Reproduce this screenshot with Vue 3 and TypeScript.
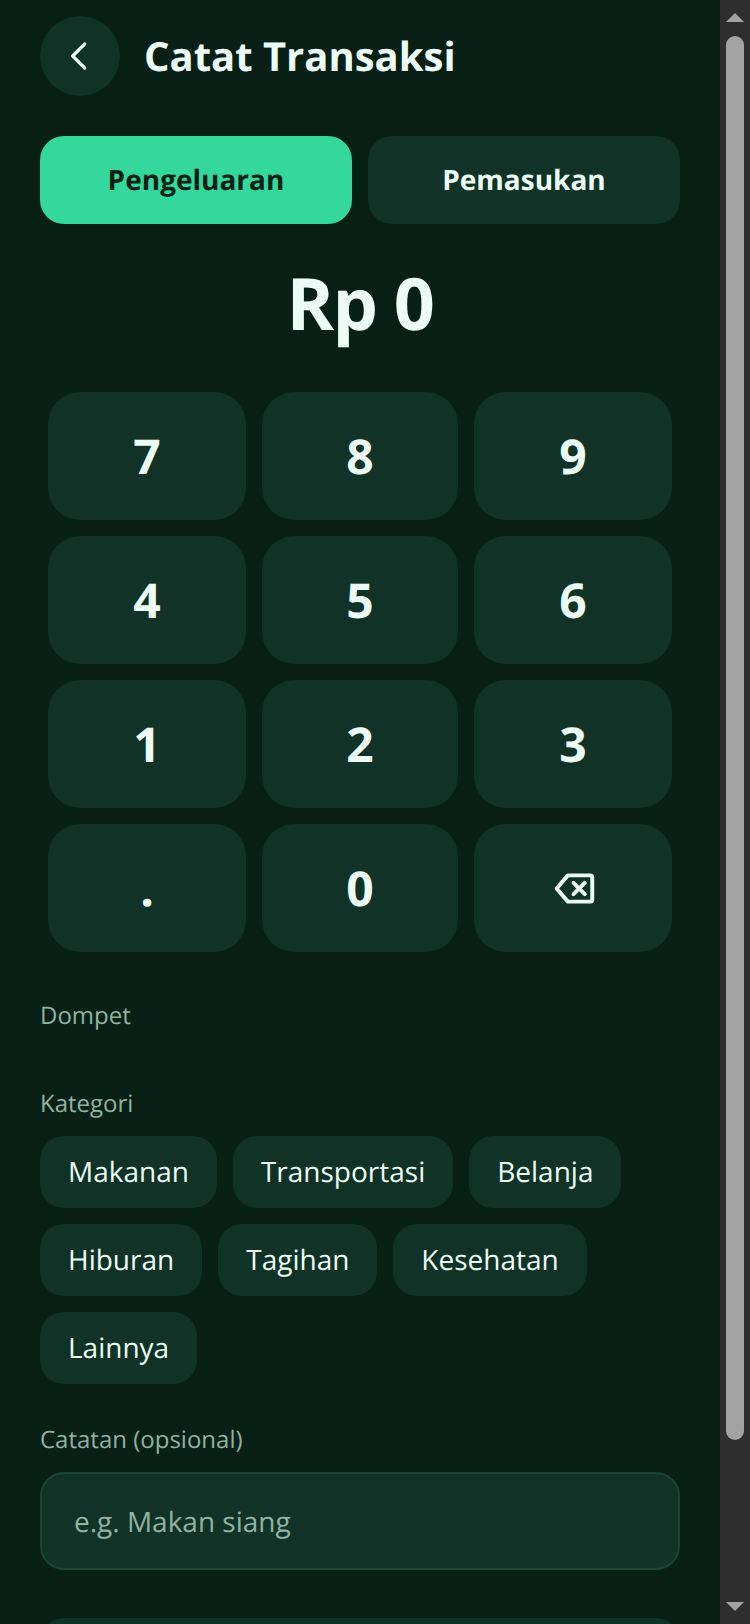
<script setup lang="ts">
import { computed, ref } from 'vue';

const KEYS = ['7', '8', '9', '4', '5', '6', '1', '2', '3', '.', '0', 'back'];
const CATEGORIES = ['Makanan', 'Transportasi', 'Belanja', 'Hiburan', 'Tagihan', 'Kesehatan', 'Lainnya'];

const type = ref<'out' | 'in'>('out');
const amount = ref('0');
const category = ref('');
const note = ref('');

const display = computed(() => `Rp ${amount.value}`);

function press(key: string) {
  if (key === 'back') {
    amount.value = amount.value.length > 1 ? amount.value.slice(0, -1) : '0';
  } else if (amount.value === '0' && key !== '.') {
    amount.value = key;
  } else {
    amount.value += key;
  }
}
</script>

<template>
  <div class="shell">
    <main class="page">
      <header class="header">
        <button type="button" class="back" aria-label="Kembali">
          <svg viewBox="0 0 24 24" width="32" height="32" fill="none" stroke="currentColor" stroke-width="2.4" stroke-linecap="round" stroke-linejoin="round">
            <path d="M15.5 3 6.5 12l9 9" />
          </svg>
        </button>
        <h1 class="title">Catat Transaksi</h1>
      </header>

      <div class="tabs">
        <button type="button" class="tab" :class="{ active: type === 'out' }" @click="type = 'out'">Pengeluaran</button>
        <button type="button" class="tab" :class="{ active: type === 'in' }" @click="type = 'in'">Pemasukan</button>
      </div>

      <div class="amount">{{ display }}</div>

      <div class="keypad">
        <button v-for="key in KEYS" :key="key" type="button" class="key" @click="press(key)">
          <svg v-if="key === 'back'" viewBox="0 0 24 24" width="45" height="45" fill="none" stroke="currentColor" stroke-width="2.1" stroke-linecap="round" stroke-linejoin="round" aria-label="Hapus">
            <path d="M21 5H9L3 12l6 7h12a1 1 0 0 0 1-1V6a1 1 0 0 0-1-1Z" />
            <path d="m12 9 6 6M18 9l-6 6" />
          </svg>
          <template v-else>{{ key }}</template>
        </button>
      </div>

      <section class="wallet">
        <div class="label">Dompet</div>
      </section>

      <section class="categories">
        <div class="label">Kategori</div>
        <div class="chips">
          <button v-for="item in CATEGORIES" :key="item" type="button" class="chip" @click="category = item">{{ item }}</button>
        </div>
      </section>

      <section class="notes">
        <label class="label" for="note">Catatan (opsional)</label>
        <input id="note" v-model="note" class="input" type="text" placeholder="e.g. Makan siang" />
      </section>

      <button type="button" class="save" aria-label="Simpan"></button>
    </main>

    <aside class="scrollbar" aria-hidden="true">
      <span class="arrow up"></span>
      <span class="thumb-track"><span class="thumb"></span></span>
      <span class="arrow down"></span>
    </aside>
  </div>
</template>

<style scoped>
.shell {
  display: flex;
  height: 1624px;
  overflow: hidden;
  background: #081f16;
  color: #ecfdf5;
  font-family: 'Open Sans', sans-serif;
  text-rendering: geometricPrecision;
}

.page {
  width: 720px;
  flex: none;
  padding: 16px 40px 0;
  box-sizing: border-box;
}

button {
  font-family: inherit;
  color: inherit;
  border: none;
  cursor: pointer;
  text-rendering: geometricPrecision;
}

.header {
  display: flex;
  align-items: center;
  gap: 24px;
}

.back {
  width: 80px;
  height: 80px;
  border-radius: 50%;
  background: #113226;
  display: flex;
  align-items: center;
  justify-content: center;
  padding: 0;
}

.title {
  margin: 0;
  font-size: 40px;
  font-weight: 700;
  line-height: 76px;
}

.tabs {
  display: flex;
  gap: 16px;
  margin-top: 40px;
}

.tab {
  flex: 1;
  height: 88px;
  border-radius: 24px;
  background: #113226;
  font-size: 28px;
  font-weight: 700;
  padding: 0 0 1px;
}

.tab.active {
  background: #34d89c;
  color: #081f16;
}

.amount {
  margin-top: 30px;
  text-align: center;
  font-size: 72px;
  font-weight: 700;
  line-height: 98px;
  letter-spacing: -1.44px;
}

.keypad {
  display: grid;
  grid-template-columns: 1fr 196px 1fr;
  gap: 16px;
  margin-top: 40px;
  padding: 0 8px;
}

.key {
  height: 128px;
  border-radius: 32px;
  background: #113226;
  font-size: 48px;
  font-weight: 700;
  display: flex;
  align-items: center;
  justify-content: center;
  padding: 0;
}

.wallet {
  margin-top: 48px;
  height: 40px;
}

.categories {
  margin-top: 48px;
}

.label {
  display: block;
  font-size: 24px;
  line-height: 32px;
  color: #8fb3a3;
}

.chips {
  display: flex;
  flex-wrap: wrap;
  gap: 16px;
  margin-top: 16px;
}

.chip {
  height: 72px;
  padding: 0 28px;
  border-radius: 24px;
  background: #113226;
  font-size: 28px;
}

.notes {
  margin-top: 40px;
}

.input {
  display: block;
  width: 100%;
  height: 98px;
  box-sizing: border-box;
  margin-top: 16px;
  padding: 2px 32px 0;
  border: 2px solid #1c4535;
  border-radius: 24px;
  background: #113226;
  color: #ecfdf5;
  font-family: inherit;
  font-size: 28px;
  text-rendering: geometricPrecision;
  outline: none;
}

.input::placeholder {
  color: #8fb3a3;
  opacity: 1;
}

.save {
  display: block;
  width: 100%;
  height: 98px;
  margin-top: 48px;
  border-radius: 24px;
  background: #113226;
}

.scrollbar {
  width: 30px;
  flex: none;
  display: flex;
  flex-direction: column;
  align-items: center;
  background: #2e2e2e;
}

.arrow {
  flex: none;
  width: 0;
  height: 0;
  border-left: 9px solid transparent;
  border-right: 9px solid transparent;
}

.arrow.up {
  margin-top: 13px;
  border-bottom: 9px solid #a3a3a3;
}

.arrow.down {
  margin-bottom: 13px;
  border-top: 9px solid #a3a3a3;
}

.thumb-track {
  flex: 1;
  width: 18px;
  padding: 14px 0 162px;
  box-sizing: border-box;
  display: flex;
}

.thumb {
  flex: 1;
  border-radius: 9px;
  background: #a3a3a3;
}
</style>

<style>
html,
body {
  background: #081f16;
  overflow: hidden;
}
</style>
